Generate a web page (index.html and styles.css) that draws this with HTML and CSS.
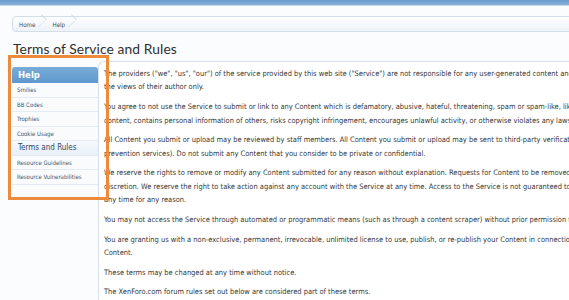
FILE: index.html
```html
<!DOCTYPE html>
<html lang="en">
<head>
    <meta charset="UTF-8">
    <title>Terms of Service and Rules</title>
    <link rel="stylesheet" href="styles.css">
</head>
<body>
    <div class="topbar"></div>
    <div class="page">
        <nav class="breadcrumb">
            <a href="#">Home</a>
            <a href="#">Help</a>
        </nav>
        <h1>Terms of Service and Rules</h1>
        <div class="layout">
            <aside class="sidebar">
                <div class="side-title">Help</div>
                <ul class="side-list">
                    <li><a href="#">Smilies</a></li>
                    <li><a href="#">BB Codes</a></li>
                    <li><a href="#">Trophies</a></li>
                    <li><a href="#">Cookie Usage</a></li>
                    <li class="selected"><a href="#">Terms and Rules</a></li>
                    <li><a href="#">Resource Guidelines</a></li>
                    <li><a href="#">Resource Vulnerabilities</a></li>
                </ul>
            </aside>
            <main class="content">
                <p>The providers ("we", "us", "our") of the service provided by this web site ("Service") are not responsible for any user-generated content and accounts ("Content"). Content submitted express<br>the views of their author only.</p>
                <p>You agree to not use the Service to submit or link to any Content which is defamatory, abusive, hateful, threatening, spam or spam-like, likely to offend, contains adult or objectionable<br>content, contains personal information of others, risks copyright infringement, encourages unlawful activity, or otherwise violates any laws.</p>
                <p>All Content you submit or upload may be reviewed by staff members. All Content you submit or upload may be sent to third-party verification services (including, but not limited to, spam<br>prevention services). Do not submit any Content that you consider to be private or confidential.</p>
                <p>We reserve the rights to remove or modify any Content submitted for any reason without explanation. Requests for Content to be removed or modified will be undertaken only at our<br>discretion. We reserve the right to take action against any account with the Service at any time. Access to the Service is not guaranteed to be available at<br>any time for any reason.</p>
                <p>You may not access the Service through automated or programmatic means (such as through a content scraper) without prior permission from us.</p>
                <p>You are granting us with a non-exclusive, permanent, irrevocable, unlimited license to use, publish, or re-publish your Content in connection with the Service. You retain copyright over the<br>Content.</p>
                <p>These terms may be changed at any time without notice.</p>
                <p>The XenForo.com forum rules set out below are considered part of these terms.</p>
            </main>
        </div>
    </div>
    <!-- highlight frame drawn over the sidebar -->
    <div class="highlight"></div>
</body>
</html>
```

FILE: styles.css
```css
body {
    margin: 0;
    background-color: #fbfcfe;
    font-family: "DejaVu Sans Condensed", "DejaVu Sans", sans-serif;
    color: #333;
    overflow: hidden;
    position: relative;
    height: 300px;
}
a {
    text-decoration: none;
    color: inherit;
}
.topbar {
    height: 5px;
    background: linear-gradient(#6b9bcb, #86b0d8);
    border-bottom: 1px solid #c9d9ea;
}
.page {
    padding: 0 0 0 12px;
    width: 1000px;
}
.breadcrumb {
    margin-top: 10px;
    height: 14px;
    border: 1px solid #d3deea;
    border-radius: 4px;
    background: linear-gradient(#fdfeff, #eef3f9);
    display: flex;
    align-items: center;
    font-size: 6.2px;
    color: #3d4f63;
}
.breadcrumb a {
    position: relative;
    padding: 0 11px 0 6px;
}
.breadcrumb a::after {
    content: "";
    position: absolute;
    right: 0;
    top: -6px;
    width: 11px;
    height: 11px;
    border-top: 1px solid #d3deea;
    border-right: 1px solid #d3deea;
    transform: rotate(45deg) scaleX(0.6);
    transform-origin: center;
}
h1 {
    margin: 7px 0 0 1px;
    font-family: Lato, "Liberation Sans", sans-serif;
    font-weight: normal;
    font-size: 13.8px;
    letter-spacing: 0.1px;
    color: #2f2f2f;
    line-height: 20px;
}
.layout {
    display: flex;
    margin-top: 2px;
}
.sidebar {
    width: 86px;
    padding-top: 6px;
    flex-shrink: 0;
}
.side-title {
    height: 16px;
    line-height: 16px;
    padding-left: 6px;
    background: linear-gradient(#78acd9, #5f98cc);
    border-radius: 3px 3px 0 0;
    color: #fff;
    font-family: "DejaVu Sans", sans-serif;
    font-weight: bold;
    font-size: 8.5px;
}
.side-list {
    list-style: none;
    margin: 0;
    padding: 0;
    background-color: #f9fbfd;
}
.side-list li {
    height: 14.5px;
    line-height: 14px;
    padding-left: 5px;
    border-bottom: 1px solid #e4ebf3;
    box-sizing: border-box;
    font-size: 6px;
    color: #3e5670;
}
.side-list li.selected {
    padding-left: 6px;
    background: linear-gradient(#f6f9fd, #e9f0f8);
    font-size: 8px;
    color: #2d4866;
}
.content {
    flex: 1;
    background-color: #fff;
    border-top: 1px solid #d7e1ec;
    border-left: 1px solid #d7e1ec;
    border-radius: 6px 0 0 0;
    padding: 5px 0 0 5px;
    font-size: 7.45px;
    line-height: 13.4px;
    color: #383838;
    min-height: 240px;
}
.content p {
    margin: 0 0 6.3px;
    white-space: nowrap;
}
.highlight {
    position: absolute;
    left: 8px;
    top: 55px;
    width: 95px;
    height: 139px;
    border: 3px solid #ee8a3b;
}
```
